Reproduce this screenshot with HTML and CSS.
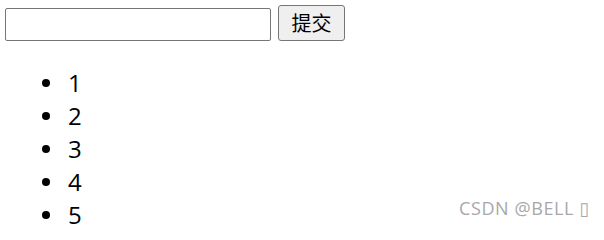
FILE: index.html
```html
<!DOCTYPE html>
<html lang="zh">
<head>
<meta charset="utf-8">
<link rel="stylesheet" href="styles.css">
</head>
<body>
<div class="form-row">
  <input class="text-input" type="text">
  <button class="submit-btn">提交</button>
</div>
<ul class="list">
  <li class="item">1</li>
  <li class="item">2</li>
  <li class="item">3</li>
  <li class="item">4</li>
  <li class="item">5</li>
</ul>
<div class="watermark">CSDN @BELL <span class="tofu">▯</span></div>
</body>
</html>
```
FILE: styles.css
```css
html, body {
  margin: 0;
  padding: 0;
  background: #fff;
}
body {
  width: 604px;
  height: 228px;
  position: relative;
  overflow: hidden;
  font-family: "Open Sans", "Noto Sans", "Noto Sans CJK SC", sans-serif;
  color: #000;
}
.form-row {
  display: flex;
  align-items: flex-end;
  gap: 7px;
  padding: 5px 0 0 5px;
}
.text-input {
  box-sizing: border-box;
  width: 266px;
  height: 33px;
  margin: 0;
  border: 1px solid #767676;
  border-radius: 2px;
  background: #fff;
  padding: 0 4px;
  outline: none;
}
.submit-btn {
  box-sizing: border-box;
  width: 67px;
  height: 36px;
  margin: 0;
  padding: 0;
  border: 1px solid #767676;
  border-radius: 3px;
  background: #efefef;
  color: #000;
  font-family: "Noto Sans CJK SC", sans-serif;
  font-size: 20px;
  line-height: 34px;
}
.list {
  list-style: none;
  margin: 25px 0 0 0;
  padding: 0 0 0 68px;
}
.item {
  position: relative;
  font-size: 24px;
  line-height: 33px;
  height: 33px;
}
.item::before {
  content: "";
  position: absolute;
  left: -26px;
  top: 13px;
  width: 8px;
  height: 8px;
  border-radius: 50%;
  background: #000;
}
.watermark {
  position: absolute;
  left: 459px;
  top: 195px;
  font-family: "Open Sans", sans-serif;
  font-size: 18px;
  line-height: 26px;
  letter-spacing: 0.6px;
  color: #a8a8a8;
  white-space: nowrap;
}
.tofu {
  font-family: "DejaVu Sans", sans-serif;
  font-size: 18px;
  letter-spacing: 0;
}
```
